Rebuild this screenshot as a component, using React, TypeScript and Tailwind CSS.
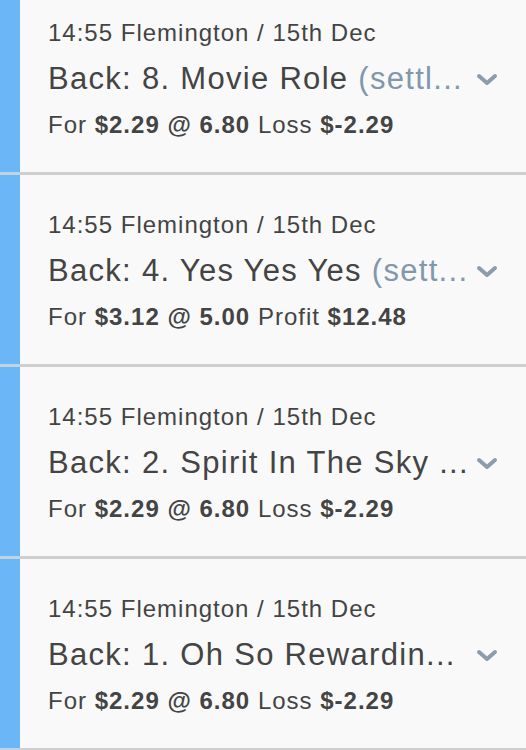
const bets = [
  { runner: "8. Movie Role", note: "(settl...", stake: "$2.29", odds: "6.80", label: "Loss", amount: "$-2.29" },
  { runner: "4. Yes Yes Yes", note: "(sett...", stake: "$3.12", odds: "5.00", label: "Profit", amount: "$12.48" },
  { runner: "2. Spirit In The Sky ...", note: "", stake: "$2.29", odds: "6.80", label: "Loss", amount: "$-2.29" },
  { runner: "1. Oh So Rewardin...", note: "", stake: "$2.29", odds: "6.80", label: "Loss", amount: "$-2.29" },
]

function Chevron() {
  return (
    <svg width="22" height="14" viewBox="0 0 22 14" className="shrink-0">
      <polyline
        points="3,3 11,10 19,3"
        fill="none"
        stroke="#8d9cad"
        strokeWidth="4"
        strokeLinecap="round"
        strokeLinejoin="round"
      />
    </svg>
  )
}

export default function App() {
  return (
    <div className="w-[526px] h-[750px] overflow-hidden bg-[#f9f9f9] text-[#444444] font-['Liberation_Sans',Arial,sans-serif]">
      <div className="-mt-[17px]">
        {bets.map((b, i) => (
          <div key={i} className="flex h-[192px]">
            <div className="w-[20px] shrink-0 bg-[#6ab6f6] border-b-[3px] border-[#bfd3e4]" />
            <div className="flex-1 min-w-0 pl-[28px] pt-[35px] border-b-[3px] border-[#cfcfcf]">
              <div className="text-[24px] leading-[30px] tracking-[1px] whitespace-nowrap">
                14:55 Flemington / 15th Dec
              </div>
              <div className="flex items-center">
                <div className="flex-1 min-w-0 whitespace-nowrap text-[31px] leading-[62px] tracking-[1.3px]">
                  Back: {b.runner}
                  {b.note && <span className="text-[#8197ac]"> {b.note}</span>}
                </div>
                <div className="ml-[10px] mr-[28px] mt-[2px]">
                  <Chevron />
                </div>
              </div>
              <div className="text-[24px] leading-[30px] tracking-[1px] whitespace-nowrap">
                For <b>{b.stake} @ {b.odds}</b> {b.label} <b>{b.amount}</b>
              </div>
            </div>
          </div>
        ))}
      </div>
    </div>
  )
}
